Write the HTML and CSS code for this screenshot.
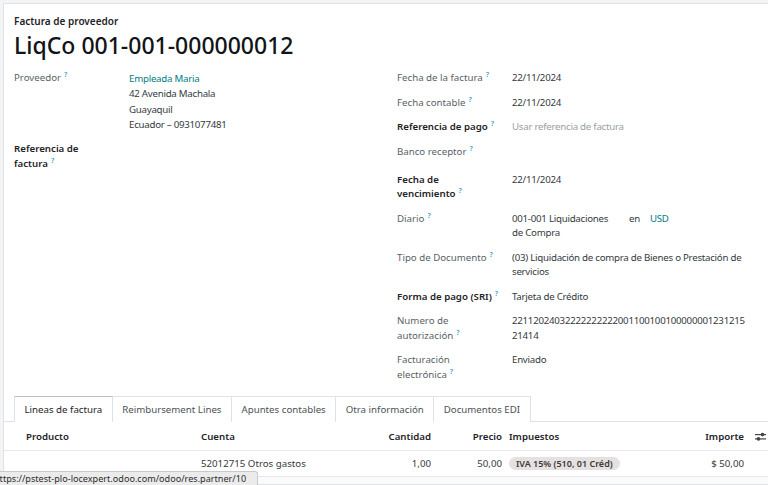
FILE: index.html
```html
<!DOCTYPE html>
<html lang="es">
<head>
<meta charset="utf-8">
<title>LiqCo 001-001-000000012</title>
<link rel="stylesheet" href="styles.css">
</head>
<body>
<div class="page">
  <div class="card">
    <div class="sheet">
      <div class="subtitle">Factura de proveedor</div>
      <h1 class="title">LiqCo 001-001-000000012</h1>
      <div class="groups">
        <div class="group">
          <div class="field">
            <div class="label">Proveedor<sup>?</sup></div>
            <div class="value addr"><a class="link">Empleada Maria</a><br>42 Avenida Machala<br>Guayaquil<br>Ecuador – 0931077481</div>
          </div>
          <div class="field">
            <div class="label bold">Referencia de<br>factura<sup>?</sup></div>
            <div class="value"></div>
          </div>
        </div>
        <div class="group">
          <div class="field">
            <div class="label">Fecha de la factura<sup>?</sup></div>
            <div class="value">22/11/2024</div>
          </div>
          <div class="field">
            <div class="label">Fecha contable<sup>?</sup></div>
            <div class="value">22/11/2024</div>
          </div>
          <div class="field">
            <div class="label bold">Referencia de pago<sup>?</sup></div>
            <div class="value placeholder">Usar referencia de factura</div>
          </div>
          <div class="field">
            <div class="label">Banco receptor<sup>?</sup></div>
            <div class="value empty"></div>
          </div>
          <div class="field">
            <div class="label bold">Fecha de<br>vencimiento<sup>?</sup></div>
            <div class="value">22/11/2024</div>
          </div>
          <div class="field">
            <div class="label">Diario<sup>?</sup></div>
            <div class="value journal">
              <span class="journal-name">001-001 Liquidaciones de Compra</span>
              <span class="en">en</span>
              <a class="link">USD</a>
            </div>
          </div>
          <div class="field">
            <div class="label">Tipo de Documento<sup>?</sup></div>
            <div class="value lines-fixed">(03) Liquidación de compra de Bienes o Prestación de<br>servicios</div>
          </div>
          <div class="field">
            <div class="label bold">Forma de pago (SRI)<sup>?</sup></div>
            <div class="value">Tarjeta de Crédito</div>
          </div>
          <div class="field">
            <div class="label">Numero de<br>autorización<sup>?</sup></div>
            <div class="value lines-fixed">22112024032222222222001100100100000001231215<br>21414</div>
          </div>
          <div class="field">
            <div class="label">Facturación<br>electrónica<sup>?</sup></div>
            <div class="value">Enviado</div>
          </div>
        </div>
      </div>
    </div>

    <div class="tabs">
      <div class="tab active">Lineas de factura</div>
      <div class="tab">Reimbursement Lines</div>
      <div class="tab">Apuntes contables</div>
      <div class="tab">Otra información</div>
      <div class="tab">Documentos EDI</div>
    </div>

    <div class="lines">
      <div class="row head">
        <div class="c-prod">Producto</div>
        <div class="c-acc">Cuenta</div>
        <div class="c-qty">Cantidad</div>
        <div class="c-price">Precio</div>
        <div class="c-tax">Impuestos</div>
        <div class="c-amt">Importe</div>
        <div class="c-opt">
          <svg width="11" height="9" viewBox="0 0 11 9">
            <rect x="0" y="2" width="11" height="1.2" fill="#444"/>
            <circle cx="7.5" cy="2.6" r="1.8" fill="#444"/>
            <rect x="0" y="6.3" width="11" height="1.2" fill="#444"/>
            <circle cx="3.5" cy="6.9" r="1.8" fill="#444"/>
          </svg>
        </div>
      </div>
      <div class="row data">
        <div class="c-prod"></div>
        <div class="c-acc">52012715 Otros gastos</div>
        <div class="c-qty">1,00</div>
        <div class="c-price">50,00</div>
        <div class="c-tax"><span class="badge">IVA 15% (510, 01 Créd)</span></div>
        <div class="c-amt">$ 50,00</div>
        <div class="c-opt"></div>
      </div>
      <div class="row next">
        <div class="c-prod"></div>
        <div class="c-acc"></div>
        <div class="c-qty"></div>
        <div class="c-price"></div>
        <div class="c-tax"><span class="badge ghost"></span></div>
        <div class="c-amt"></div>
        <div class="c-opt"></div>
      </div>
    </div>
  </div>
  <div class="statusbar"><span>https://pstest-plo-locexpert.odoo.com/odoo/res.partner/10</span></div>
</div>
</body>
</html>
```

FILE: styles.css
```css
html, body {
  margin: 0;
  height: 100%;
}
body {
  background: #f3f4f6;
  font-family: "Noto Sans", "Open Sans", sans-serif;
  font-size: 9.7px;
  color: #374151;
  overflow: hidden;
}
.page {
  padding: 3px 0 0 3px;
  height: 485px;
  box-sizing: border-box;
  position: relative;
}
.card {
  background: #fff;
  border: 1px solid #dee2e6;
  border-right: none;
  height: 100%;
  box-sizing: border-box;
  overflow: hidden;
}
.sheet {
  padding: 10px 11px 0 10px;
}
.subtitle {
  font-weight: 600;
  color: #1f2328;
  line-height: 15px;
  font-size: 10px;
}
.title {
  font-size: 23px;
  font-weight: 500;
  line-height: 30px;
  margin: 1px 0 0;
  color: #111418;
}
.groups {
  display: grid;
  grid-template-columns: minmax(0, 1fr) minmax(0, 1fr);
  column-gap: 23px;
  margin-top: 11px;
}
.field {
  display: grid;
  grid-template-columns: 115px minmax(0, 1fr);
  line-height: 14.5px;
  margin-bottom: 10px;
}
.label {
  color: #5a5f66;
  white-space: nowrap;
}
.label.bold {
  color: #1f2328;
  font-weight: 600;
}
sup {
  font-size: 7px;
  line-height: 0;
  color: #3d9fc4;
  font-weight: 600;
  margin-left: 3px;
  vertical-align: 0;
  position: relative;
  top: -4px;
}
.value {
  color: #343a40;
  letter-spacing: -0.25px;
}
.lines-fixed {
  white-space: nowrap;
}
.addr {
  line-height: 15.3px;
}
.link {
  color: #017e84;
}
.placeholder {
  color: #9aa0a6;
}
.empty {
  min-height: 18px;
}
.journal {
  display: flex;
  align-items: flex-start;
}
.journal-name {
  width: 108px;
}
.en {
  margin-left: 9px;
  margin-right: 10px;
}

.tabs {
  display: flex;
  margin-top: 4px;
  padding-left: 10px;
  border-bottom: 1px solid #dee2e6;
  height: 26px;
  box-sizing: border-box;
}
.tab {
  border: 1px solid #dee2e6;
  border-bottom: none;
  margin-right: -1px;
  padding: 0 9.5px;
  line-height: 25px;
  color: #4b5157;
  background: #fff;
  height: 26px;
  box-sizing: border-box;
  white-space: nowrap;
}
.tab.active {
  color: #1f2328;
  border-top-color: #c9b8c5;
  position: relative;
  z-index: 1;
}

.row {
  display: grid;
  grid-template-columns: 193px 158px 80px 70px 176px 67px 1fr;
  align-items: center;
  border-bottom: 1px solid #e6e8eb;
}
.row > div {
  padding: 0 4px;
  white-space: nowrap;
}
.row .c-prod {
  padding-left: 22px;
}
.row .c-qty,
.row .c-price,
.row .c-amt {
  text-align: right;
}
.row .c-price {
  padding-right: 3px;
}
.row .c-opt {
  display: flex;
  align-items: center;
  padding-left: 7px;
}
.head {
  height: 28px;
  font-weight: 600;
  color: #1f2328;
}
.data {
  height: 25px;
  color: #343a40;
}
.next {
  height: 20px;
  background: #fafafa;
  border-bottom: none;
  align-items: end;
}
.badge {
  display: inline-block;
  background: #e6e0e0;
  color: #3a3a3a;
  font-size: 9px;
  font-weight: 600;
  border-radius: 7px;
  padding: 0 7px;
  line-height: 13px;
}
.badge.ghost {
  width: 86px;
  height: 5px;
  background: #fff;
  border: 1px solid #e2e2e2;
  border-bottom: none;
  border-radius: 7px 7px 0 0;
}

.statusbar {
  position: absolute;
  left: 0;
  bottom: 0;
  width: 258px;
  height: 14px;
  background: #ebebeb;
  border-top: 1px solid #c9c9c9;
  border-right: 1px solid #c9c9c9;
  border-top-right-radius: 3px;
  overflow: hidden;
  box-sizing: border-box;
  font-size: 9.1px;
  line-height: 13px;
  color: #2b2b2b;
  z-index: 5;
}
.statusbar span {
  display: block;
  white-space: nowrap;
  margin-left: -6px;
}
```
